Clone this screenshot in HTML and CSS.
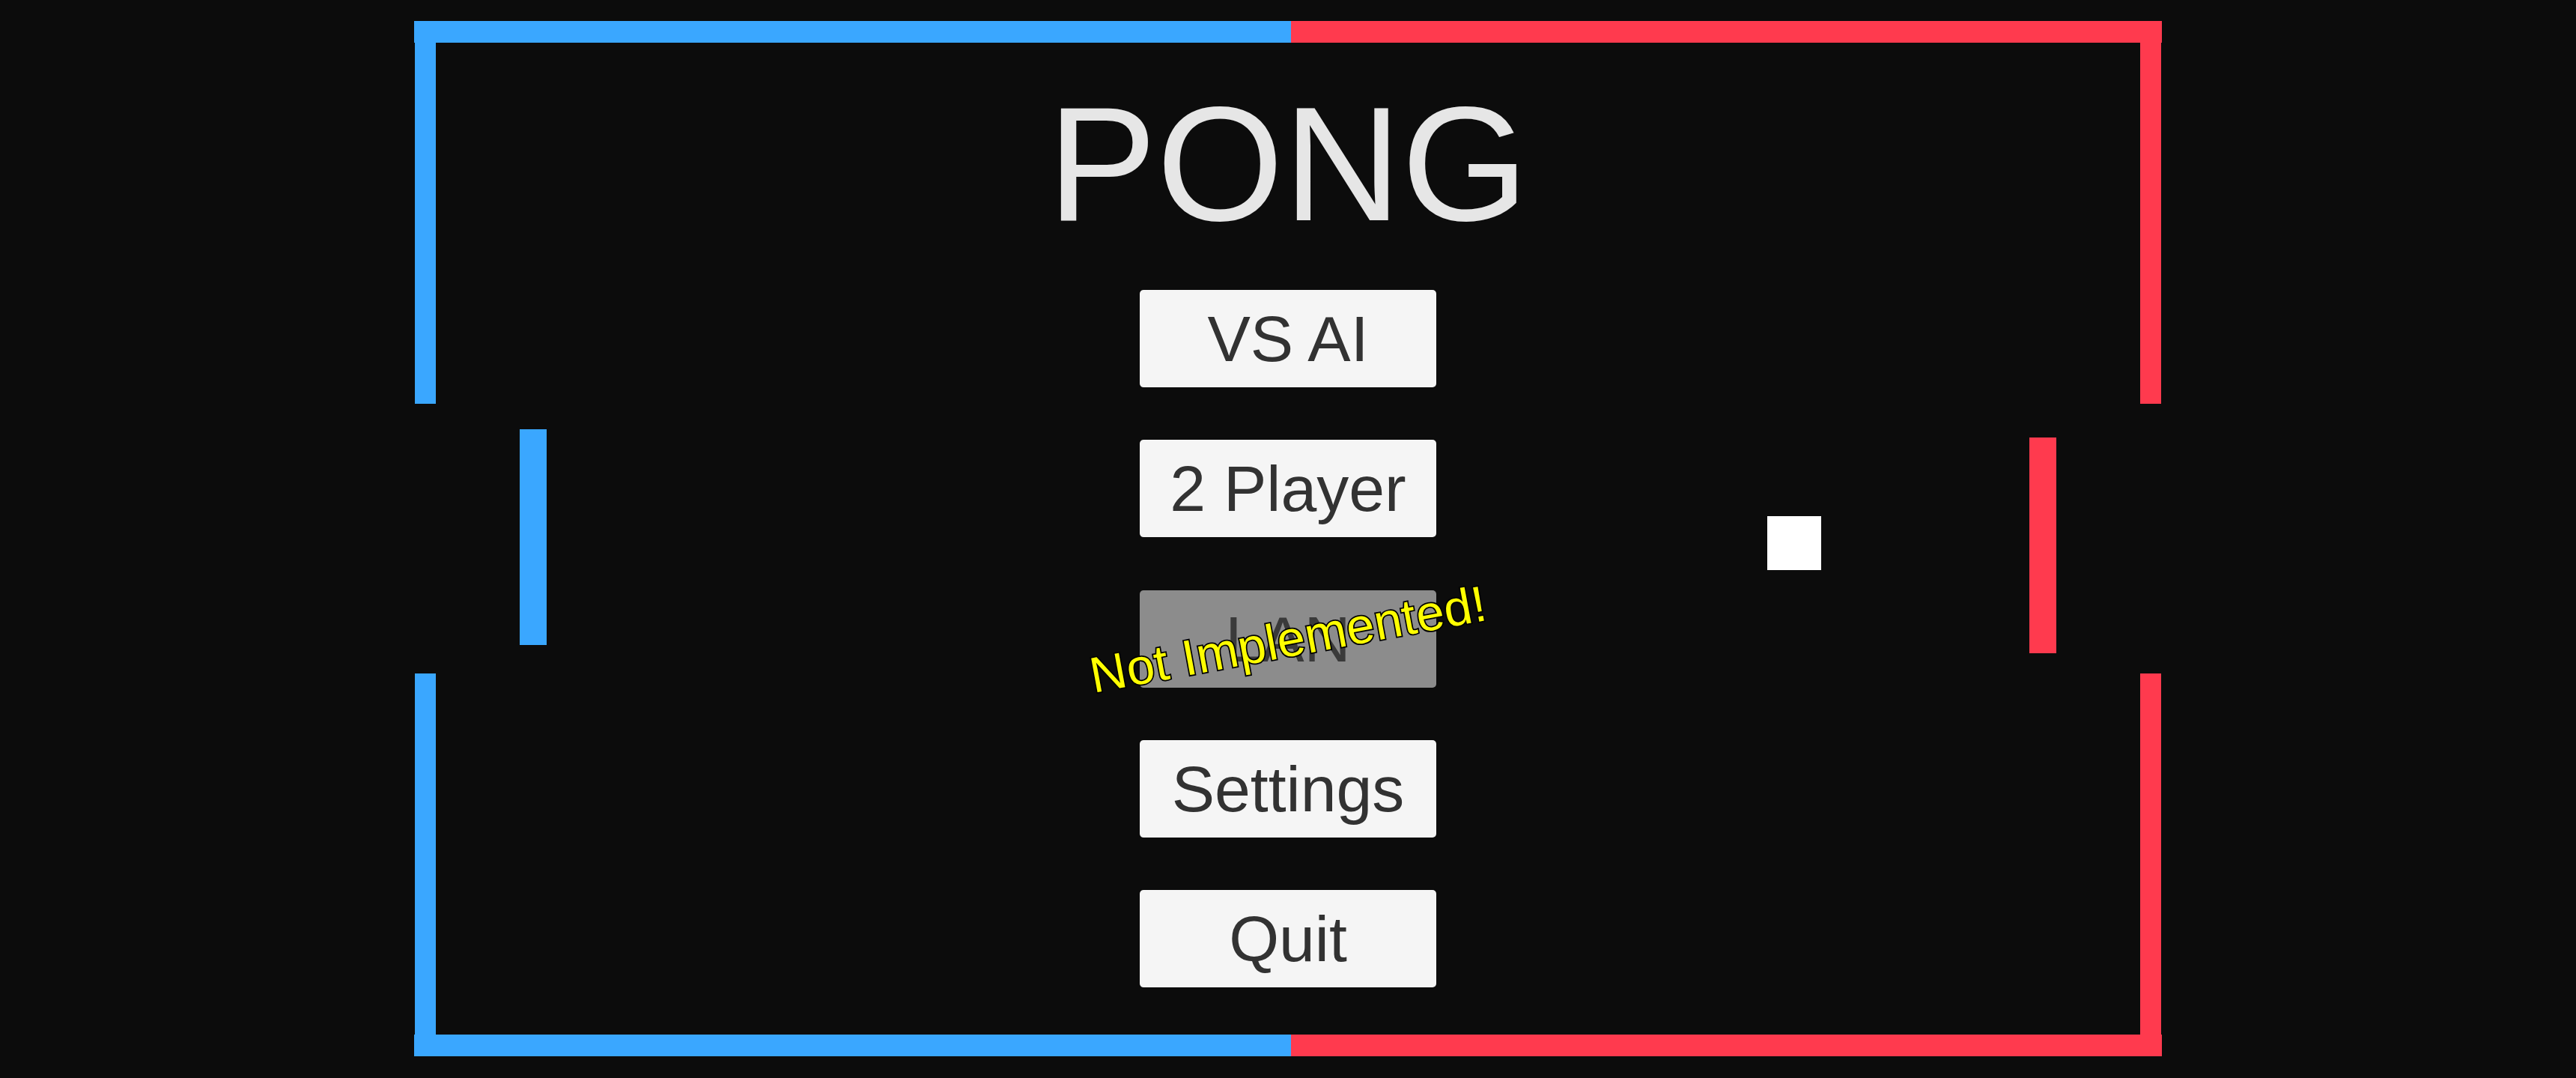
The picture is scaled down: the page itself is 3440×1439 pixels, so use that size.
FILE: index.html
```html
<!DOCTYPE html>
<html lang="en">
<head>
<meta charset="utf-8">
<title>Pong</title>
<link rel="stylesheet" href="styles.css">
</head>
<body>
<div class="game">
  <div class="wall wall-top-blue"></div>
  <div class="wall wall-top-red"></div>
  <div class="wall wall-bottom-blue"></div>
  <div class="wall wall-bottom-red"></div>
  <div class="wall wall-left-upper"></div>
  <div class="wall wall-left-lower"></div>
  <div class="wall wall-right-upper"></div>
  <div class="wall wall-right-lower"></div>
  <div class="paddle paddle-left"></div>
  <div class="paddle paddle-right"></div>
  <div class="ball"></div>

  <main class="menu">
    <h1 class="title">PONG</h1>
    <div class="buttons">
      <button class="btn">VS AI</button>
      <button class="btn">2 Player</button>
      <button class="btn btn-disabled">LAN<span class="badge">Not Implemented!</span></button>
      <button class="btn">Settings</button>
      <button class="btn">Quit</button>
    </div>
  </main>
</div>
</body>
</html>
```
FILE: styles.css
```css
html, body {
  margin: 0;
  padding: 0;
  width: 100%;
  height: 100%;
  background: #0c0c0c;
  overflow: hidden;
}

.game {
  position: relative;
  width: 3440px;
  height: 1439px;
  font-family: "Liberation Sans", Arial, sans-serif;
}

/* walls of the playing field */
.wall {
  position: absolute;
}
.wall-top-blue, .wall-bottom-blue, .wall-left-upper, .wall-left-lower {
  background: #3aa7ff;
}
.wall-top-red, .wall-bottom-red, .wall-right-upper, .wall-right-lower {
  background: #ff3a4e;
}
.wall-top-blue { left: 553px; top: 28px; width: 1171px; height: 29px; }
.wall-top-red { left: 1724px; top: 28px; width: 1163px; height: 29px; }
.wall-bottom-blue { left: 553px; top: 1381px; width: 1171px; height: 29px; }
.wall-bottom-red { left: 1724px; top: 1381px; width: 1163px; height: 29px; }
.wall-left-upper { left: 554px; top: 28px; width: 28px; height: 511px; }
.wall-left-lower { left: 554px; top: 899px; width: 28px; height: 511px; }
.wall-right-upper { left: 2858px; top: 28px; width: 28px; height: 511px; }
.wall-right-lower { left: 2858px; top: 899px; width: 28px; height: 511px; }

.paddle {
  position: absolute;
  width: 36px;
  height: 288px;
}
.paddle-left { left: 694px; top: 573px; background: #3aa7ff; }
.paddle-right { left: 2710px; top: 584px; background: #ff3a4e; }

.ball {
  position: absolute;
  left: 2360px;
  top: 689px;
  width: 72px;
  height: 72px;
  background: #ffffff;
}

/* menu */
.menu {
  position: relative;
  display: flex;
  flex-direction: column;
  align-items: center;
  padding-top: 110px;
}

.title {
  margin: 0 0 59px 0;
  font-family: "Liberation Sans", Arial, sans-serif;
  font-weight: normal;
  font-size: 218px;
  line-height: 218px;
  height: 218px;
  color: #e6e6e6;
}

.buttons {
  display: flex;
  flex-direction: column;
  gap: 70.25px;
}

.btn {
  position: relative;
  width: 396px;
  height: 130px;
  margin: 0;
  padding: 0;
  border: none;
  border-radius: 5px;
  background: #f5f5f5;
  color: #323232;
  font-family: "Liberation Sans", Arial, sans-serif;
  font-size: 86px;
  line-height: 1;
  display: flex;
  align-items: center;
  justify-content: center;
}

.btn-disabled {
  background: #8c8c8c;
  color: #3a3a3a;
}

.badge {
  position: absolute;
  left: 50%;
  top: 50%;
  transform: translate(-50%, -50%) rotate(-10.5deg);
  white-space: nowrap;
  font-family: "Liberation Sans", Arial, sans-serif;
  font-size: 67px;
  letter-spacing: 0.5px;
  line-height: 1;
  color: #ffff00;
  -webkit-text-stroke: 3.5px #000000;
  paint-order: stroke fill;
}
```
